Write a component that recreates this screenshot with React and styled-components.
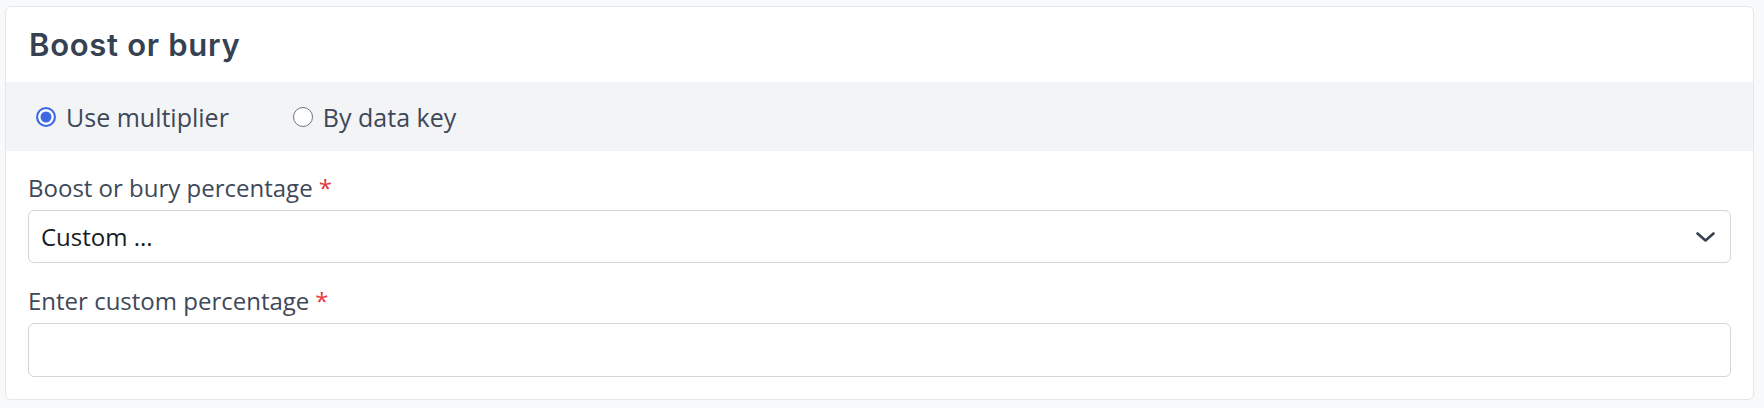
import { createGlobalStyle, styled } from "styled-components";

const GlobalStyle = createGlobalStyle`
  html, body {
    margin: 0;
    padding: 0;
    background: #f8f9fb;
  }
  body {
    font-family: "Open Sans", "Liberation Sans", sans-serif;
  }
  * {
    box-sizing: border-box;
  }
`;

const Page = styled.div`
  padding: 6px 0 0 5px;
  height: 408px;
`;

const Card = styled.section`
  width: 1749px;
  height: 394px;
  background: #ffffff;
  border: 1px solid #e4e6eb;
  border-radius: 6px;
  overflow: hidden;
  display: flex;
  flex-direction: column;
`;

const Header = styled.header`
  height: 75px;
  padding: 0 22px 0 23px;
  display: flex;
  align-items: center;
`;

const Title = styled.h2`
  margin: 0;
  font-family: Inter, "Liberation Sans", sans-serif;
  font-weight: 600;
  font-size: 31px;
  letter-spacing: 0.7px;
  color: #364152;
`;

const ModeBar = styled.div`
  height: 69px;
  background: #f3f4f6;
  padding: 0 30px;
  display: flex;
  align-items: center;
  gap: 64px;
`;

const RadioOption = styled.label`
  display: flex;
  align-items: center;
  gap: 10px;
  font-size: 25px;
  color: #3e4858;
  cursor: pointer;
`;

const RadioInput = styled.input`
  appearance: none;
  margin: 0;
  width: 20px;
  height: 20px;
  border-radius: 50%;
  border: 1.5px solid #6b7280;
  background: #ffffff;

  &:checked {
    border: 2px solid #3d6ae4;
    background: #3d6ae4;
    box-shadow: inset 0 0 0 2.5px #ffffff;
  }
`;

const Body = styled.div`
  padding: 19px 22px 0;
  display: flex;
  flex-direction: column;
  gap: 20px;
`;

const Field = styled.div`
  display: flex;
  flex-direction: column;
  gap: 4px;
`;

const Label = styled.label`
  font-size: 24px;
  line-height: 36px;
  color: #3e4858;
`;

const Required = styled.span`
  color: #e5383b;
  margin-left: 6px;
`;

const SelectBox = styled.div`
  position: relative;
  height: 53px;
  border: 1px solid #d3d5db;
  border-radius: 6px;
  display: flex;
  align-items: center;
  padding: 0 12px;
  font-size: 24px;
  color: #161b24;
  background: #ffffff;
`;

const Chevron = styled.svg`
  position: absolute;
  right: 15px;
  top: 50%;
  transform: translateY(-50%);
`;

const TextInput = styled.input`
  height: 54px;
  width: 100%;
  border: 1px solid #d3d5db;
  border-radius: 6px;
  padding: 0 12px;
  font-family: "Open Sans", "Liberation Sans", sans-serif;
  font-size: 24px;
  color: #161b24;
  outline: none;
`;

export default function App() {
  return (
    <>
      <GlobalStyle />
      <Page>
        <Card>
          <Header>
            <Title>Boost or bury</Title>
          </Header>
          <ModeBar>
            <RadioOption>
              <RadioInput type="radio" name="mode" defaultChecked />
              Use multiplier
            </RadioOption>
            <RadioOption>
              <RadioInput type="radio" name="mode" />
              By data key
            </RadioOption>
          </ModeBar>
          <Body>
            <Field>
              <Label>
                Boost or bury percentage<Required>*</Required>
              </Label>
              <SelectBox>
                Custom ...
                <Chevron width="19" height="10" viewBox="0 0 19 10" fill="none">
                  <polyline
                    points="1.5,1.5 9.5,8.5 17.5,1.5"
                    stroke="#374151"
                    strokeWidth="2.6"
                    strokeLinecap="round"
                    strokeLinejoin="round"
                  />
                </Chevron>
              </SelectBox>
            </Field>
            <Field>
              <Label>
                Enter custom percentage<Required>*</Required>
              </Label>
              <TextInput type="text" />
            </Field>
          </Body>
        </Card>
      </Page>
    </>
  );
}
